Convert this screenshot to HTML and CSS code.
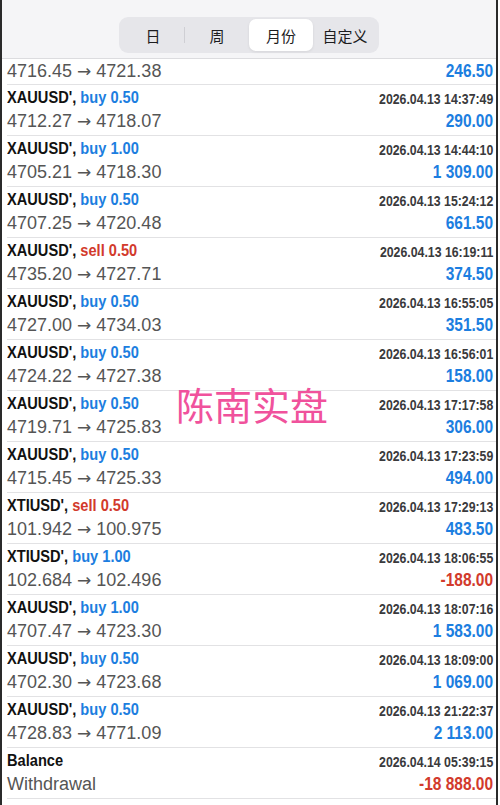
FILE: index.html
```html
<!DOCTYPE html>
<html lang="zh-CN">

<head>
    <meta charset="UTF-8" />
    <title>历史</title>
    <link rel="stylesheet" href="styles.css">
</head>

<body>
    <div class="page">
        <header class="top-bar">
            <div class="segments">
                <div class="seg">日</div>
                <div class="seg">周</div>
                <div class="seg active">月份</div>
                <div class="seg">自定义</div>
            </div>
        </header>

        <div class="deals" id="deals">
            <div class="deal partial">
                <div class="line">
                    <span class="prices">4716.45 <span class="arrow">→</span> 4721.38</span>
                    <span class="profit">246.50</span>
                </div>
            </div>
        </div>

        <div class="watermark">陈南实盘</div>
    </div>

    <script>
        const deals = [
            ['XAUUSD\'', 'buy', '0.50', '2026.04.13 14:37:49', '4712.27', '4718.07', '290.00'],
            ['XAUUSD\'', 'buy', '1.00', '2026.04.13 14:44:10', '4705.21', '4718.30', '1 309.00'],
            ['XAUUSD\'', 'buy', '0.50', '2026.04.13 15:24:12', '4707.25', '4720.48', '661.50'],
            ['XAUUSD\'', 'sell', '0.50', '2026.04.13 16:19:11', '4735.20', '4727.71', '374.50'],
            ['XAUUSD\'', 'buy', '0.50', '2026.04.13 16:55:05', '4727.00', '4734.03', '351.50'],
            ['XAUUSD\'', 'buy', '0.50', '2026.04.13 16:56:01', '4724.22', '4727.38', '158.00'],
            ['XAUUSD\'', 'buy', '0.50', '2026.04.13 17:17:58', '4719.71', '4725.83', '306.00'],
            ['XAUUSD\'', 'buy', '0.50', '2026.04.13 17:23:59', '4715.45', '4725.33', '494.00'],
            ['XTIUSD\'', 'sell', '0.50', '2026.04.13 17:29:13', '101.942', '100.975', '483.50'],
            ['XTIUSD\'', 'buy', '1.00', '2026.04.13 18:06:55', '102.684', '102.496', '-188.00'],
            ['XAUUSD\'', 'buy', '1.00', '2026.04.13 18:07:16', '4707.47', '4723.30', '1 583.00'],
            ['XAUUSD\'', 'buy', '0.50', '2026.04.13 18:09:00', '4702.30', '4723.68', '1 069.00'],
            ['XAUUSD\'', 'buy', '0.50', '2026.04.13 21:22:37', '4728.83', '4771.09', '2 113.00']
        ];

        const list = document.getElementById('deals');

        function profitClass(value) {
            return value.startsWith('-') ? 'profit loss' : 'profit';
        }

        list.innerHTML += deals.map(([symbol, type, volume, time, open, close, profit]) => `
            <div class="deal">
                <div class="line">
                    <span class="title">${symbol}, <span class="${type}">${type} ${volume}</span></span>
                    <span class="time">${time}</span>
                </div>
                <div class="line">
                    <span class="prices">${open} <span class="arrow">→</span> ${close}</span>
                    <span class="${profitClass(profit)}">${profit}</span>
                </div>
            </div>
        `).join('');

        // balance operation goes last
        list.innerHTML += `
            <div class="deal">
                <div class="line">
                    <span class="title">Balance</span>
                    <span class="time">2026.04.14 05:39:15</span>
                </div>
                <div class="line">
                    <span class="prices">Withdrawal</span>
                    <span class="profit loss">-18 888.00</span>
                </div>
            </div>
        `;
    </script>
</body>

</html>
```

FILE: styles.css
```css
body {
    margin: 0;
    background: #fff;
    font-family: "Liberation Sans", Arial, sans-serif;
    color: #111;
}

.page {
    position: relative;
    width: 494px;
    height: 805px;
    border-left: 2px solid #2a2a2a;
    border-right: 2px solid #2a2a2a;
    overflow: hidden;
}

.top-bar {
    height: 59px;
    background: #f5f5f7;
    border-bottom: 1px solid #dcdcdf;
    display: flex;
    justify-content: center;
    padding-top: 17px;
    box-sizing: border-box;
}

.segments {
    display: flex;
    width: 260px;
    height: 36px;
    padding: 2px;
    box-sizing: border-box;
    background: #e6e6ea;
    border-radius: 9px;
}

.seg {
    flex: 1;
    display: flex;
    align-items: center;
    justify-content: center;
    font-family: "Noto Sans CJK SC", sans-serif;
    font-size: 15px;
    color: #1c1c1e;
    position: relative;
}

.seg:first-child::after {
    content: "";
    position: absolute;
    right: 0;
    top: 8px;
    bottom: 8px;
    width: 1px;
    background: #cfcfd4;
}

.seg.active {
    background: #fff;
    border-radius: 7px;
    box-shadow: 0 1px 3px rgba(0, 0, 0, 0.08);
}

.deal {
    margin-left: 5px;
    padding: 2px 3px 2px 0;
    border-bottom: 1px solid #e2e2e4;
}

.deal.partial {
    padding: 0 3px 1px 0;
}

.line {
    display: flex;
    justify-content: space-between;
    align-items: center;
    height: 22px;
}

.line + .line {
    height: 24px;
}

.partial .line {
    height: 24px;
}

/* the bold app font is condensed, squeeze Liberation Sans to match */
.title,
.time,
.profit {
    font-weight: bold;
    transform: scaleX(0.86);
}

.title {
    font-size: 17px;
    color: #111;
    transform-origin: left center;
}

.buy {
    color: #1c7ee0;
}

.sell {
    color: #d23a2c;
}

.time {
    font-size: 15px;
    color: #3a3a3c;
    transform: scaleX(0.82);
    transform-origin: right center;
}

.prices {
    font-size: 18px;
    color: #555;
}

.arrow {
    font-family: "DejaVu Sans", sans-serif;
    font-size: 17px;
    color: #555;
}

.profit {
    font-size: 18px;
    color: #1c7ee0;
    transform-origin: right center;
}

.profit.loss {
    color: #d23a2c;
}

.watermark {
    position: absolute;
    left: 174px;
    top: 376px;
    font-family: "Noto Sans CJK SC", sans-serif;
    font-size: 38px;
    color: #f0529c;
}
```
